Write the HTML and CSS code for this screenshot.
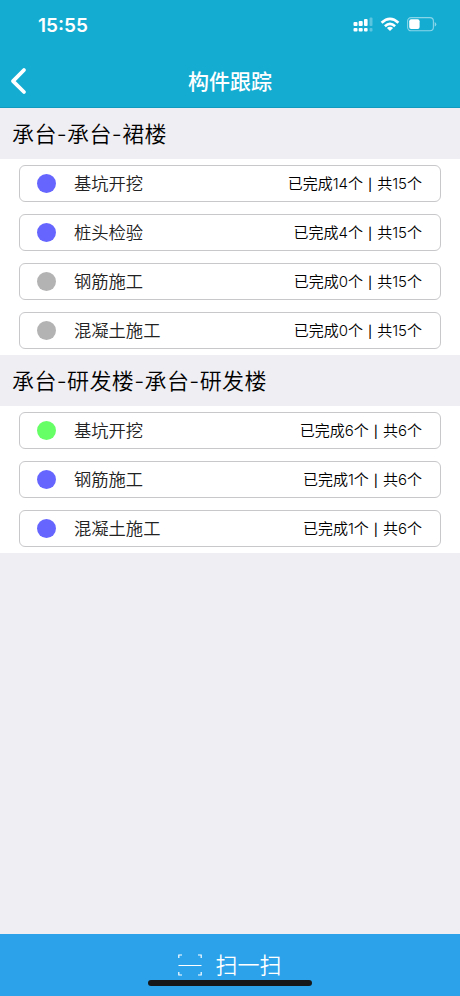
FILE: index.html
```html
<!DOCTYPE html>
<html lang="zh-CN">
<head>
    <meta charset="UTF-8">
    <meta name="viewport" content="width=device-width, initial-scale=1.0">
    <link rel="stylesheet" href="styles.css">
    <title>构件跟踪</title>
</head>
<body>
    <header class="header">
        <div class="status">
            <span class="time">15:55</span>
            <div class="status-icons">
                <svg class="signal" width="20" height="15" viewBox="0 0 20 15" fill="#fff">
                    <rect x="0.5" y="5" width="4" height="4" rx="1"/>
                    <rect x="5.7" y="4" width="4" height="5" rx="1"/>
                    <rect x="11" y="2" width="3.6" height="7" rx="1"/>
                    <rect x="0.5" y="11" width="4" height="3.5" rx="1"/>
                    <rect x="5.7" y="11" width="4" height="3.5" rx="1"/>
                    <rect x="11" y="11" width="3.6" height="3.5" rx="1"/>
                    <rect x="16.5" y="0.5" width="3" height="8.5" rx="1" opacity=".3"/>
                    <rect x="16.5" y="11" width="3" height="3.5" rx="1" opacity=".3"/>
                </svg>
                <svg class="wifi" width="20" height="15" viewBox="0 0 20 15" fill="none" stroke="#fff" stroke-width="2.7">
                    <path d="M1.6 5.7Q10-2 18.4 5.7"/>
                    <path d="M4.9 9.2Q10 4.7 15.1 9.2"/>
                    <path d="M10 14L6.9 10.9Q10 8.4 13.1 10.9Z" fill="#fff" stroke="none"/>
                </svg>
                <svg class="battery" width="30" height="15" viewBox="0 0 30 15">
                    <rect x=".6" y=".6" width="25.8" height="13.2" rx="3.5" fill="none" stroke="#fff" stroke-width="1.1" opacity=".5"/>
                    <rect x="2.2" y="2.3" width="10.4" height="9.8" rx="2" fill="#fff"/>
                    <path d="M27.7 5v4.6q1.6-.7 1.6-2.3t-1.6-2.3z" fill="#fff" opacity=".5"/>
                </svg>
            </div>
        </div>
        <div class="nav">
            <svg class="back" width="18" height="28" viewBox="0 0 18 28" fill="none" stroke="#fff" stroke-width="3.8" stroke-linecap="round" stroke-linejoin="round">
                <path d="M14 3L3 14.2L14 25"/>
            </svg>
            <h1>构件跟踪</h1>
        </div>
    </header>

    <main>
        <h2>承台-承台-裙楼</h2>
        <ul class="list">
            <li><span class="dot blue"></span><span class="name">基坑开挖</span><span class="count">已完成14个 <i>|</i> 共15个</span></li>
            <li><span class="dot blue"></span><span class="name">桩头检验</span><span class="count">已完成4个 <i>|</i> 共15个</span></li>
            <li><span class="dot gray"></span><span class="name">钢筋施工</span><span class="count">已完成0个 <i>|</i> 共15个</span></li>
            <li><span class="dot gray"></span><span class="name">混凝土施工</span><span class="count">已完成0个 <i>|</i> 共15个</span></li>
        </ul>
        <h2>承台-研发楼-承台-研发楼</h2>
        <ul class="list">
            <li><span class="dot green"></span><span class="name">基坑开挖</span><span class="count">已完成6个 <i>|</i> 共6个</span></li>
            <li><span class="dot blue"></span><span class="name">钢筋施工</span><span class="count">已完成1个 <i>|</i> 共6个</span></li>
            <li><span class="dot blue"></span><span class="name">混凝土施工</span><span class="count">已完成1个 <i>|</i> 共6个</span></li>
        </ul>
    </main>

    <footer class="scan">
        <svg width="24" height="22" viewBox="0 0 24 22" fill="none" stroke="#fff" stroke-width="1.2">
            <path d="M.8 4V1H4M20 1h3.2v3M.8 18v3H4M20 21h3.2v-3M.5 11.5h23"/>
        </svg>
        <span class="scan-text">扫一扫</span>
        <div class="home-bar"></div>
    </footer>
</body>
</html>
```
FILE: styles.css
```css
* {
    box-sizing: border-box;
}
body {
    margin: 0;
    height: 996px;
    display: flex;
    flex-direction: column;
    overflow: hidden;
    background-color: #efeef3;
    color: #000;
    font-family: Inter, "Noto Sans CJK SC", sans-serif;
}
.header {
    height: 108px;
    background-color: #15acd2;
    color: #fff;
    border-bottom: 1px solid #1299be;
}
.status {
    height: 54px;
    padding: 0 23px 0 38px;
    display: flex;
    align-items: center;
    justify-content: space-between;
}
.time {
    font-size: 19px;
    font-weight: 600;
    line-height: 24px;
    margin-top: -3px;
}
.status-icons {
    display: flex;
    gap: 7px;
    margin-top: -5px;
}
.nav {
    height: 54px;
    padding: 0 10px;
    display: grid;
    grid-template-columns: 18px 1fr 18px;
    align-items: center;
}
h1 {
    margin: 0;
    padding-top: 1px;
    font-size: 21px;
    font-weight: 500;
    line-height: 30px;
    text-align: center;
}
h2 {
    margin: 0;
    height: 51px;
    padding: 1px 0 0 12px;
    font-size: 22px;
    font-weight: 350;
    line-height: 51px;
    letter-spacing: 0.38px;
}
.list {
    margin: 0;
    padding: 6px 19px;
    display: grid;
    gap: 12px;
    list-style: none;
    background-color: #fff;
}
.list li {
    height: 37px;
    padding: 0 18px 0 17px;
    display: flex;
    align-items: center;
    border: 1px solid #c8c8cb;
    border-radius: 6px;
}
.dot {
    width: 19px;
    height: 19px;
    margin-right: 18px;
    border-radius: 50%;
}
.blue {
    background-color: #6666ff;
}
.gray {
    background-color: #b3b3b3;
}
.green {
    background-color: #66ff66;
}
.name {
    flex: 1;
    padding-bottom: 2px;
    font-size: 17.3px;
    font-weight: 350;
    color: #222;
}
.count {
    padding-bottom: 2px;
    font-size: 15px;
    font-weight: 350;
}
.count i {
    margin: 0 0.8px;
    font-size: 12px;
    font-style: normal;
    font-weight: 500;
}
.scan {
    position: relative;
    height: 62px;
    margin-top: auto;
    display: flex;
    align-items: center;
    justify-content: center;
    gap: 13px;
    background-color: #2ba2ea;
    color: #fff;
    font-size: 22px;
    font-weight: 350;
}
.scan-text {
    padding-bottom: 4px;
}
/* system home indicator, lies over the footer */
.home-bar {
    position: absolute;
    left: 148px;
    bottom: 10px;
    width: 164px;
    height: 6px;
    border-radius: 3px;
    background-color: #151719;
}
```
